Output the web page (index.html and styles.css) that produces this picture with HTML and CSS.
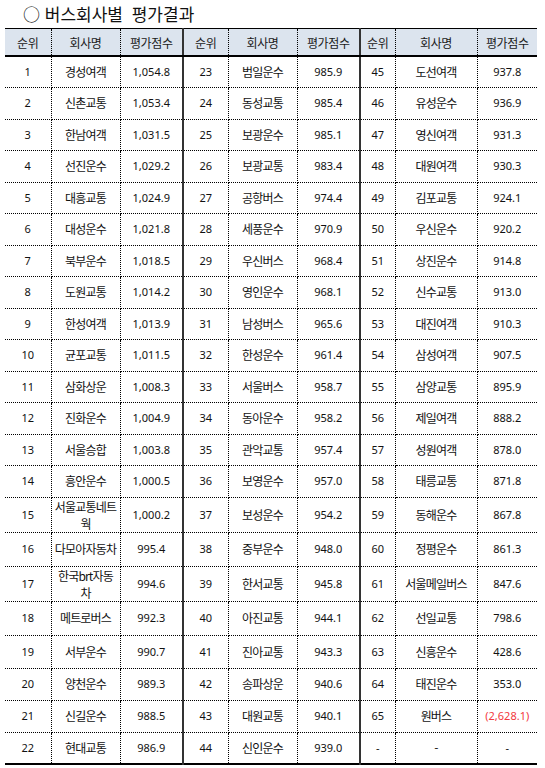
FILE: index.html
```html
<!DOCTYPE html>
<html lang="ko">
<head>
<meta charset="utf-8">
<title>버스회사별 평가결과</title>
<link rel="stylesheet" href="styles.css">
</head>
<body>
<div class="page">
  <h1 class="title">○ <span class="title-text">버스회사별 평가결과</span></h1>
  <table class="grid">
    <colgroup>
      <col class="c-rank"><col class="c-name"><col class="c-score">
      <col class="c-rank2"><col class="c-name"><col class="c-score">
      <col class="c-rank3"><col class="c-name3"><col class="c-score3">
    </colgroup>
    <thead>
      <tr>
        <th>순위</th><th>회사명</th><th class="g">평가점수</th>
        <th>순위</th><th>회사명</th><th class="g">평가점수</th>
        <th>순위</th><th>회사명</th><th class="end">평가점수</th>
      </tr>
    </thead>
    <tbody>
      <tr class="r"><td class="n">1</td><td class="k">경성여객</td><td class="n g">1,054.8</td><td class="n">23</td><td class="k">범일운수</td><td class="n g">985.9</td><td class="n">45</td><td class="k">도선여객</td><td class="n end">937.8</td></tr>
      <tr class="r"><td class="n">2</td><td class="k">신촌교통</td><td class="n g">1,053.4</td><td class="n">24</td><td class="k">동성교통</td><td class="n g">985.4</td><td class="n">46</td><td class="k">유성운수</td><td class="n end">936.9</td></tr>
      <tr class="r"><td class="n">3</td><td class="k">한남여객</td><td class="n g">1,031.5</td><td class="n">25</td><td class="k">보광운수</td><td class="n g">985.1</td><td class="n">47</td><td class="k">영신여객</td><td class="n end">931.3</td></tr>
      <tr class="r"><td class="n">4</td><td class="k">선진운수</td><td class="n g">1,029.2</td><td class="n">26</td><td class="k">보광교통</td><td class="n g">983.4</td><td class="n">48</td><td class="k">대원여객</td><td class="n end">930.3</td></tr>
      <tr class="r"><td class="n">5</td><td class="k">대흥교통</td><td class="n g">1,024.9</td><td class="n">27</td><td class="k">공항버스</td><td class="n g">974.4</td><td class="n">49</td><td class="k">김포교통</td><td class="n end">924.1</td></tr>
      <tr class="r"><td class="n">6</td><td class="k">대성운수</td><td class="n g">1,021.8</td><td class="n">28</td><td class="k">세풍운수</td><td class="n g">970.9</td><td class="n">50</td><td class="k">우신운수</td><td class="n end">920.2</td></tr>
      <tr class="r"><td class="n">7</td><td class="k">북부운수</td><td class="n g">1,018.5</td><td class="n">29</td><td class="k">우신버스</td><td class="n g">968.4</td><td class="n">51</td><td class="k">상진운수</td><td class="n end">914.8</td></tr>
      <tr class="r"><td class="n">8</td><td class="k">도원교통</td><td class="n g">1,014.2</td><td class="n">30</td><td class="k">영인운수</td><td class="n g">968.1</td><td class="n">52</td><td class="k">신수교통</td><td class="n end">913.0</td></tr>
      <tr class="r"><td class="n">9</td><td class="k">한성여객</td><td class="n g">1,013.9</td><td class="n">31</td><td class="k">남성버스</td><td class="n g">965.6</td><td class="n">53</td><td class="k">대진여객</td><td class="n end">910.3</td></tr>
      <tr class="r"><td class="n">10</td><td class="k">균포교통</td><td class="n g">1,011.5</td><td class="n">32</td><td class="k">한성운수</td><td class="n g">961.4</td><td class="n">54</td><td class="k">삼성여객</td><td class="n end">907.5</td></tr>
      <tr class="r"><td class="n">11</td><td class="k">삼화상운</td><td class="n g">1,008.3</td><td class="n">33</td><td class="k">서울버스</td><td class="n g">958.7</td><td class="n">55</td><td class="k">삼양교통</td><td class="n end">895.9</td></tr>
      <tr class="r"><td class="n">12</td><td class="k">진화운수</td><td class="n g">1,004.9</td><td class="n">34</td><td class="k">동아운수</td><td class="n g">958.2</td><td class="n">56</td><td class="k">제일여객</td><td class="n end">888.2</td></tr>
      <tr class="r"><td class="n">13</td><td class="k">서울승합</td><td class="n g">1,003.8</td><td class="n">35</td><td class="k">관악교통</td><td class="n g">957.4</td><td class="n">57</td><td class="k">성원여객</td><td class="n end">878.0</td></tr>
      <tr class="r"><td class="n">14</td><td class="k">흥안운수</td><td class="n g">1,000.5</td><td class="n">36</td><td class="k">보영운수</td><td class="n g">957.0</td><td class="n">58</td><td class="k">태릉교통</td><td class="n end">871.8</td></tr>
      <tr class="r-tall"><td class="n">15</td><td class="k two">서울교통네트<br>웍</td><td class="n g">1,000.2</td><td class="n">37</td><td class="k">보성운수</td><td class="n g">954.2</td><td class="n">59</td><td class="k">동해운수</td><td class="n end">867.8</td></tr>
      <tr class="r-34"><td class="n">16</td><td class="k">다모아자동차</td><td class="n g">995.4</td><td class="n">38</td><td class="k">중부운수</td><td class="n g">948.0</td><td class="n">60</td><td class="k">정평운수</td><td class="n end">861.3</td></tr>
      <tr class="r-tall"><td class="n">17</td><td class="k two">한국brt자동<br>차</td><td class="n g">994.6</td><td class="n">39</td><td class="k">한서교통</td><td class="n g">945.8</td><td class="n">61</td><td class="k">서울메일버스</td><td class="n end">847.6</td></tr>
      <tr class="r-34"><td class="n">18</td><td class="k">메트로버스</td><td class="n g">992.3</td><td class="n">40</td><td class="k">아진교통</td><td class="n g">944.1</td><td class="n">62</td><td class="k">선일교통</td><td class="n end">798.6</td></tr>
      <tr class="r-33"><td class="n">19</td><td class="k">서부운수</td><td class="n g">990.7</td><td class="n">41</td><td class="k">진아교통</td><td class="n g">943.3</td><td class="n">63</td><td class="k">신흥운수</td><td class="n end">428.6</td></tr>
      <tr class="r-32"><td class="n">20</td><td class="k">양천운수</td><td class="n g">989.3</td><td class="n">42</td><td class="k">송파상운</td><td class="n g">940.6</td><td class="n">64</td><td class="k">태진운수</td><td class="n end">353.0</td></tr>
      <tr class="r-32"><td class="n">21</td><td class="k">신길운수</td><td class="n g">988.5</td><td class="n">43</td><td class="k">대원교통</td><td class="n g">940.1</td><td class="n">65</td><td class="k">원버스</td><td class="n end neg">(2,628.1)</td></tr>
      <tr class="r-32"><td class="n">22</td><td class="k">현대교통</td><td class="n g">986.9</td><td class="n">44</td><td class="k">신인운수</td><td class="n g">939.0</td><td class="n">-</td><td class="k">-</td><td class="n end">-</td></tr>
    </tbody>
  </table>
</div>
</body>
</html>
```

FILE: styles.css
```css
html, body {
  margin: 0;
  padding: 0;
  background: #ffffff;
}

body {
  font-family: "Noto Sans", "Noto Sans CJK KR", sans-serif;
  color: #111111;
}

.page {
  padding: 0 8px 0 5px;
}

.title {
  margin: 0;
  height: 28px;
  padding-left: 18px;
  font-family: "Noto Sans CJK KR", sans-serif;
  font-size: 17px;
  font-weight: normal;
  line-height: 28px;
  color: #111111;
}

.title-text {
  word-spacing: 4px;
}

.grid {
  border-collapse: collapse;
  table-layout: fixed;
  width: 532px;
  border-top: 1px solid #000000;
  border-bottom: 2px solid #000000;
}

.c-rank { width: 46px; }
.c-rank2 { width: 45px; }
.c-name { width: 69px; }
.c-score { width: 63px; }
.c-rank3 { width: 35px; }
.c-name3 { width: 82px; }
.c-score3 { width: 60px; }

.grid th,
.grid td {
  padding: 0;
  text-align: center;
  vertical-align: middle;
  white-space: nowrap;
  overflow: visible;
  border-right: 1px dotted #000000;
  border-bottom: 1px dotted #000000;
}

.grid th {
  height: 26px;
  background: #dce4ee;
  border-bottom: 2px solid #000000;
  font-family: "Noto Sans CJK KR", sans-serif;
  font-size: 12px;
  font-weight: normal;
  letter-spacing: -0.4px;
  color: #1a1a1a;
}

.grid .g {
  border-right: 2px solid #333333;
}

.grid .end {
  border-right: none;
}

.r { height: 31.5px; }
.r-tall { height: 35px; }
.r-34 { height: 34px; }
.r-33 { height: 33px; }
.r-32 { height: 32px; }

.grid td.k {
  font-family: "Noto Sans CJK KR", sans-serif;
  font-size: 12px;
  letter-spacing: -0.8px;
  line-height: 16px;
}

.grid td.two {
  line-height: 17px;
}

.grid td.n {
  font-size: 11px;
  line-height: 16px;
}

.grid td.neg {
  color: #f2383d;
}
```
